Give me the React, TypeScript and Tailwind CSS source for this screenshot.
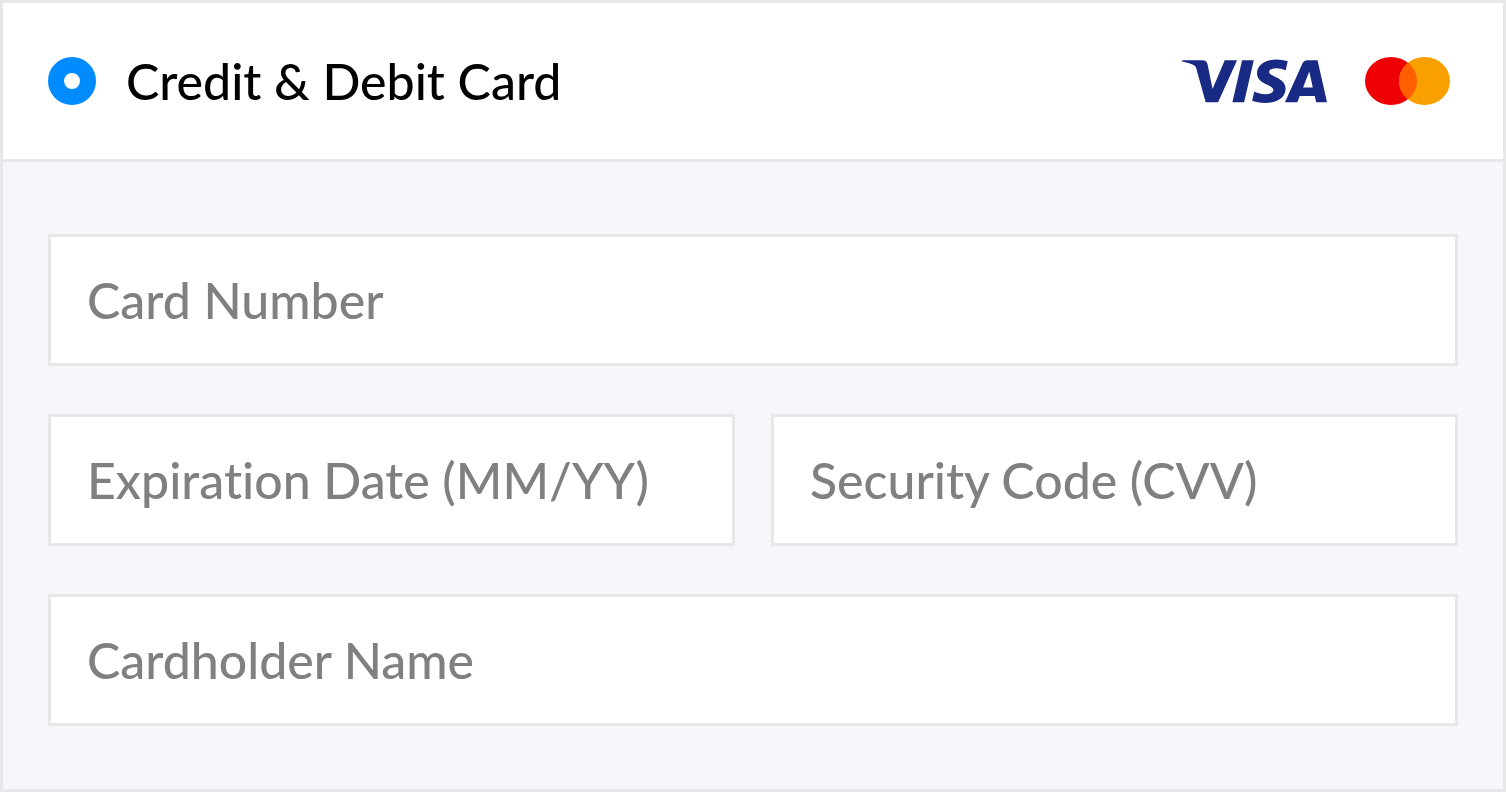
import { useState } from "react";
import { SiVisa } from "react-icons/si";

type FieldProps = {
  id: string;
  label: string;
  autoComplete: string;
  numeric?: boolean;
};

const Field = ({ id, label, autoComplete, numeric }: FieldProps) => {
  const [value, setValue] = useState("");

  return (
    <input
      id={id}
      type="text"
      inputMode={numeric ? "numeric" : "text"}
      autoComplete={autoComplete}
      aria-label={label}
      placeholder={label}
      value={value}
      onChange={(e) => setValue(e.target.value)}
      className="block w-full min-w-0 border-3 border-[#e6e7e9] bg-white px-9 py-[33px] text-[50px] leading-[60px] font-medium text-black placeholder:text-[#808080] outline-none focus:border-[#008cff]"
    />
  );
};

const Mastercard = () => (
  <svg viewBox="0 0 85 48" className="h-12 w-[85px]" role="img" aria-label="Mastercard">
    <ellipse cx="26" cy="24" rx="26" ry="24" fill="#ee0005" />
    <ellipse cx="59.5" cy="24" rx="25.5" ry="24" fill="#f9a000" />
    {/* overlap */}
    <path d="M43 5.8C48.6 10.2 52 16.7 52 24S48.6 37.8 43 42.2C37.4 37.8 34 31.3 34 24S37.4 10.2 43 5.8Z" fill="#ff5f01" />
  </svg>
);

const App = () => {
  const [method, setMethod] = useState("card");

  return (
    <form className="w-full border-3 border-[#e6e7e9] bg-[#f5f7fb] font-['Lato',sans-serif] [font-variant-ligatures:none]">
      {/* payment method */}
      <div className="flex items-center justify-between border-b-3 border-[#e6e7e9] bg-white py-12 pr-[53px] pl-[45px]">
        <label htmlFor="method-card" className="flex cursor-pointer items-center gap-[30px]">
          <input
            id="method-card"
            type="radio"
            name="method"
            value="card"
            checked={method === "card"}
            onChange={(e) => setMethod(e.target.value)}
            className="size-12 shrink-0 appearance-none rounded-full border-3 border-[#e6e7e9] bg-white checked:border-16 checked:border-[#008cff]"
          />
          <span className="text-[50px] leading-[60px] font-medium text-black">Credit &amp; Debit Card</span>
        </label>
        <div className="flex shrink-0 items-center gap-[38px]">
          <SiVisa
            viewBox="0 7.86 24 8.2"
            preserveAspectRatio="none"
            className="h-[46px] w-[145px] text-[#182a83]"
            role="img"
            aria-label="Visa"
          />
          <Mastercard />
        </div>
      </div>

      {/* card details */}
      <div className="grid grid-cols-1 gap-y-12 px-[45px] pt-18 pb-[63px]">
        <Field id="card-number" label="Card Number" autoComplete="cc-number" numeric />
        <div className="grid grid-cols-2 gap-x-9">
          <Field id="card-expiry" label="Expiration Date (MM/YY)" autoComplete="cc-exp" numeric />
          <Field id="card-cvv" label="Security Code (CVV)" autoComplete="cc-csc" numeric />
        </div>
        <Field id="card-name" label="Cardholder Name" autoComplete="cc-name" />
      </div>
    </form>
  );
};

export default App;
